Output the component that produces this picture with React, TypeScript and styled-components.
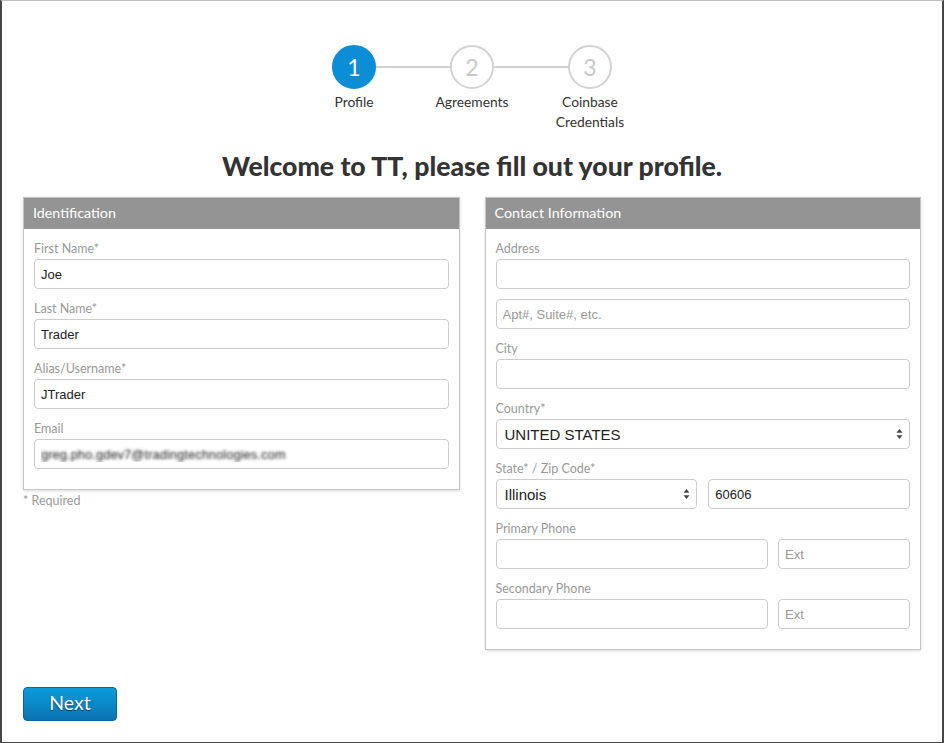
import React from "react";
import styled, { createGlobalStyle, css } from "styled-components";

const GlobalStyle = createGlobalStyle`
  html, body { margin: 0; padding: 0; background: #fff; }
  body { font-family: Lato, "Noto Sans", sans-serif; }
  *, *::before, *::after { box-sizing: border-box; }
`;

const Page = styled.div`
  min-height: 100vh;
  border: 2px solid #474747;
  border-top: 1px solid #bdbdbd;
  padding: 0 21px 21px;
  display: flex;
  flex-direction: column;
`;

const Stepper = styled.div`
  display: flex;
  justify-content: center;
  padding-top: 44px;
`;

const Step = styled.div<{ $last?: boolean }>`
  width: 118px;
  display: flex;
  flex-direction: column;
  align-items: center;
  position: relative;
  ${(p) =>
    !p.$last &&
    css`
      &::after {
        content: "";
        position: absolute;
        top: 21px;
        left: calc(50% + 22px);
        width: 74px;
        height: 2px;
        background: #d2d2d2;
      }
    `}
`;

const Circle = styled.div<{ $active?: boolean }>`
  width: 44px;
  height: 44px;
  border-radius: 50%;
  display: flex;
  align-items: center;
  justify-content: center;
  font-size: 23px;
  font-weight: 400;
  border: 2px solid ${(p) => (p.$active ? "#0b8ed5" : "#d2d2d2")};
  background: ${(p) => (p.$active ? "#0b8ed5" : "#fff")};
  color: ${(p) => (p.$active ? "#fff" : "#c8c8c8")};
`;

const StepLabel = styled.div`
  margin-top: 3px;
  font-size: 13.8px;
  line-height: 20px;
  color: #333;
  text-align: center;
  white-space: nowrap;
`;

const Title = styled.h1`
  margin: 18px 0 15px;
  font-size: 26.6px;
  line-height: 32px;
  font-weight: 900;
  text-align: center;
  color: #333;
`;

const Columns = styled.div`
  display: grid;
  grid-template-columns: 1fr 1fr;
  column-gap: 25px;
  align-items: start;
`;

const Column = styled.div`
  display: flex;
  flex-direction: column;
`;

const Panel = styled.section`
  border: 1px solid #c6c6c6;
  box-shadow: 0 1px 3px rgba(0, 0, 0, 0.15);
  background: #fff;
`;

const PanelHeader = styled.div`
  background: #949494;
  color: #fff;
  font-size: 14.3px;
  height: 31px;
  line-height: 30px;
  padding: 0 9px;
`;

const PanelBody = styled.div`
  padding: 10px 10px 20px;
  display: flex;
  flex-direction: column;
  gap: 10px;
`;

const Field = styled.div`
  display: flex;
  flex-direction: column;
`;

const Label = styled.label`
  font-size: 12.5px;
  line-height: 20px;
  color: #999;
`;

const Input = styled.input<{ $blur?: boolean }>`
  width: 100%;
  height: 30px;
  border: 1px solid #cccccc;
  border-radius: 4px;
  padding: 0 6px;
  font-family: "Liberation Sans", Arial, sans-serif;
  font-size: 13px;
  color: #222;
  background: #fff;
  outline: none;
  &::placeholder {
    color: #999;
  }
  ${(p) =>
    p.$blur &&
    css`
      color: transparent;
      text-shadow: 0 0 3px rgba(0, 0, 0, 0.85);
    `}
`;

const Row = styled.div<{ $cols: string; $gap: number }>`
  display: grid;
  grid-template-columns: ${(p) => p.$cols};
  column-gap: ${(p) => p.$gap}px;
`;

const SelectWrap = styled.div`
  position: relative;
`;

const Select = styled.select`
  width: 100%;
  height: 30px;
  appearance: none;
  -webkit-appearance: none;
  border: 1px solid #cccccc;
  border-radius: 4px;
  padding: 0 22px 0 8px;
  font-family: "Liberation Sans", Arial, sans-serif;
  font-size: 15px;
  color: #222;
  background: #fff;
  outline: none;
`;

const Arrows = styled.svg`
  position: absolute;
  right: 7px;
  top: 50%;
  transform: translateY(-50%);
  pointer-events: none;
`;

const Required = styled.div`
  margin-top: 3px;
  font-size: 12.5px;
  line-height: 16px;
  color: #999;
`;

const Footer = styled.div`
  margin-top: 37px;
`;

const NextButton = styled.button`
  width: 94px;
  height: 34px;
  border: 1px solid #0b6398;
  border-radius: 4px;
  background: linear-gradient(#0d9bdb, #0a74b1);
  color: #fff;
  font-family: Lato, "Noto Sans", sans-serif;
  font-size: 19.5px;
  line-height: 30px;
  text-shadow: 0 1px 1px rgba(0, 0, 0, 0.6);
  cursor: pointer;
  padding: 0 0 2px;
`;

const SelectArrows = () => (
  <Arrows width="7" height="11" viewBox="0 0 7 11">
    <path d="M3.5 0.5 L6.5 4.2 H0.5 Z" fill="#444" />
    <path d="M3.5 10.5 L6.5 6.8 H0.5 Z" fill="#444" />
  </Arrows>
);

const steps = [
  { n: 1, label: ["Profile"], active: true },
  { n: 2, label: ["Agreements"] },
  { n: 3, label: ["Coinbase", "Credentials"] },
];

export default function App() {
  return (
    <>
      <GlobalStyle />
      <Page>
        <Stepper>
          {steps.map((s, i) => (
            <Step key={s.n} $last={i === steps.length - 1}>
              <Circle $active={s.active}>{s.n}</Circle>
              <StepLabel>
                {s.label.map((l, j) => (
                  <React.Fragment key={l}>
                    {j > 0 && <br />}
                    {l}
                  </React.Fragment>
                ))}
              </StepLabel>
            </Step>
          ))}
        </Stepper>

        <Title>Welcome to TT, please fill out your profile.</Title>

        <Columns>
          <Column>
            <Panel>
              <PanelHeader>Identification</PanelHeader>
              <PanelBody>
                <Field>
                  <Label>First Name*</Label>
                  <Input defaultValue="Joe" />
                </Field>
                <Field>
                  <Label>Last Name*</Label>
                  <Input defaultValue="Trader" />
                </Field>
                <Field>
                  <Label>Alias/Username*</Label>
                  <Input defaultValue="JTrader" />
                </Field>
                <Field>
                  <Label>Email</Label>
                  <Input $blur defaultValue="greg.pho.gdev7@tradingtechnologies.com" />
                </Field>
              </PanelBody>
            </Panel>
            <Required>* Required</Required>
          </Column>

          <Column>
            <Panel>
              <PanelHeader>Contact Information</PanelHeader>
              <PanelBody>
                <Field>
                  <Label>Address</Label>
                  <Input />
                </Field>
                <Input placeholder="Apt#, Suite#, etc." />
                <Field>
                  <Label>City</Label>
                  <Input />
                </Field>
                <Field>
                  <Label>Country*</Label>
                  <SelectWrap>
                    <Select defaultValue="US">
                      <option value="US">UNITED STATES</option>
                    </Select>
                    <SelectArrows />
                  </SelectWrap>
                </Field>
                <Field>
                  <Label>State* / Zip Code*</Label>
                  <Row $cols="1fr 1fr" $gap={11}>
                    <SelectWrap>
                      <Select defaultValue="IL">
                        <option value="IL">Illinois</option>
                      </Select>
                      <SelectArrows />
                    </SelectWrap>
                    <Input defaultValue="60606" />
                  </Row>
                </Field>
                <Field>
                  <Label>Primary Phone</Label>
                  <Row $cols="1fr 132px" $gap={10}>
                    <Input />
                    <Input placeholder="Ext" />
                  </Row>
                </Field>
                <Field>
                  <Label>Secondary Phone</Label>
                  <Row $cols="1fr 132px" $gap={10}>
                    <Input />
                    <Input placeholder="Ext" />
                  </Row>
                </Field>
              </PanelBody>
            </Panel>
          </Column>
        </Columns>

        <Footer>
          <NextButton>Next</NextButton>
        </Footer>
      </Page>
    </>
  );
}
